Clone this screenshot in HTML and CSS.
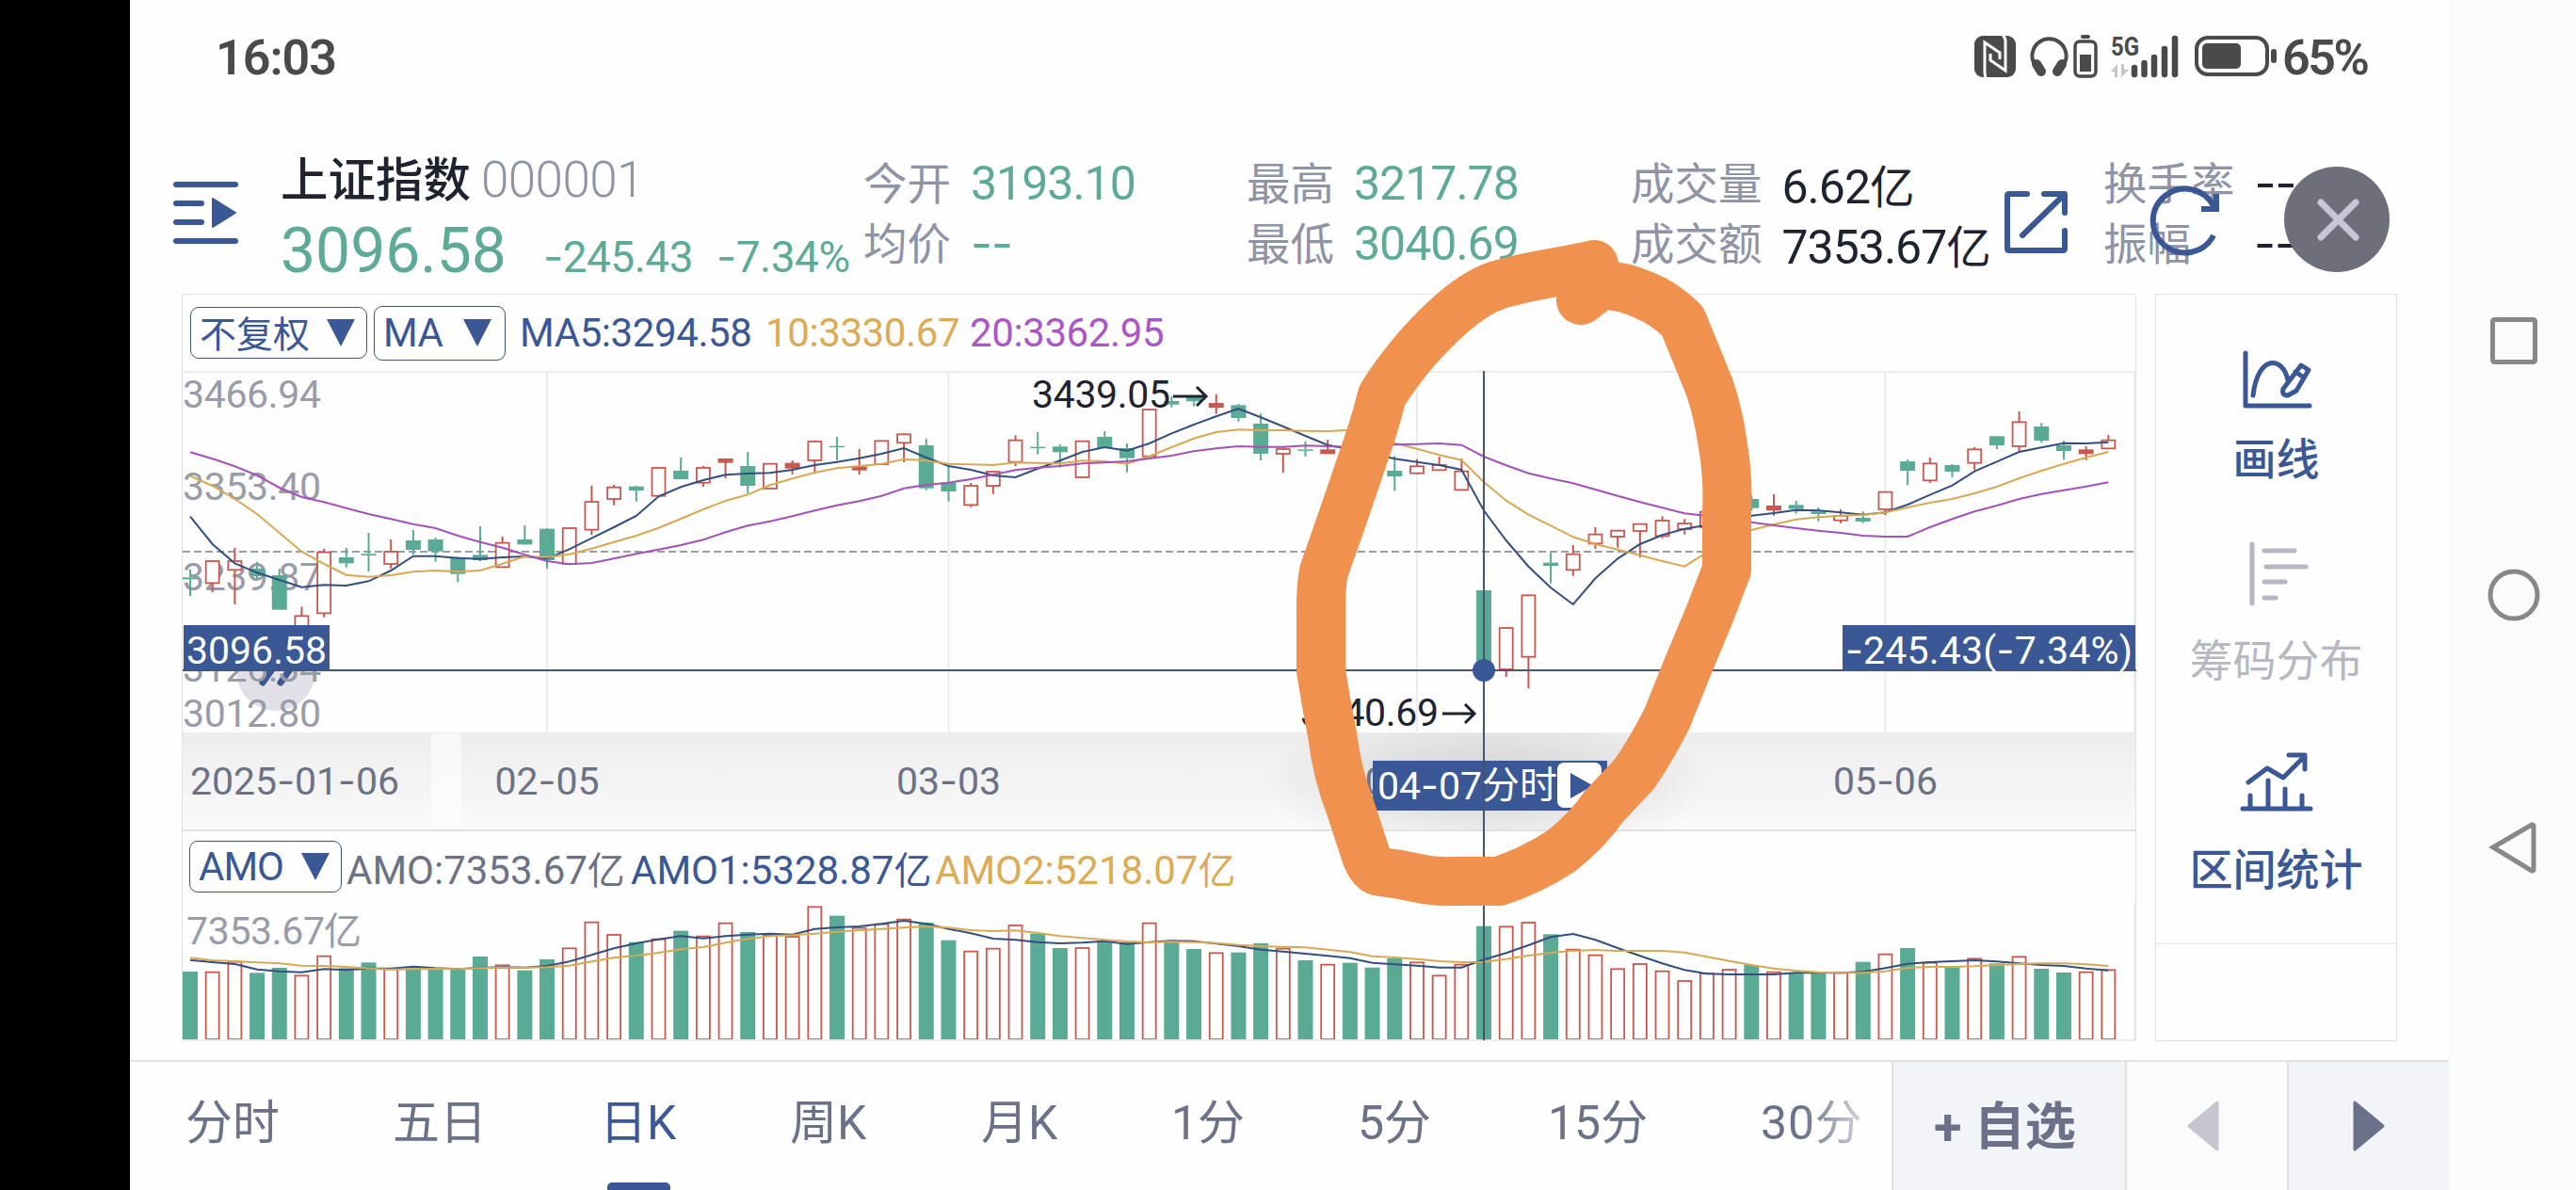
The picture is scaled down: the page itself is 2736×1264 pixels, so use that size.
FILE: index.html
```html
<!DOCTYPE html>
<html lang="zh-CN">
<head>
    <meta charset="UTF-8">
    <title>上证指数 000001</title>
    <link rel="stylesheet" href="styles.css">
</head>
<body>
    <div class="screen">
        <div class="cutout"></div>

        <div class="app">
            <div class="status">
                <span class="clock">16:03</span>
                <svg class="status-icons" width="324" height="50" viewBox="2096 35 324 50">
                    <rect x="2097" y="38" width="44" height="44" rx="9" fill="#4a4a4a"/>
                    <path d="M2109 83Q2108 80 2108 76V45L2124 56V63M2114 57V64L2130 75V44Q2130 40 2127 37" fill="none" stroke="#fff" stroke-width="3"/>
                    <path d="M2161 68Q2157 62 2159 55A18 18 0 0 1 2194 55Q2196 62 2192 68" fill="none" stroke="#4a4a4a" stroke-width="4"/>
                    <path d="M2163 68L2168 76M2190 68L2185 76" stroke="#4a4a4a" stroke-width="10" stroke-linecap="round"/>
                    <rect x="2210" y="37" width="10" height="4" rx="2" fill="#4a4a4a"/>
                    <rect x="2204" y="44" width="22" height="37" rx="5" fill="none" stroke="#4a4a4a" stroke-width="3.5"/>
                    <rect x="2209" y="58" width="12" height="18" fill="#4a4a4a"/>
                    <text x="2242" y="59" class="net" textLength="30" lengthAdjust="spacingAndGlyphs">5G</text>
                    <path d="M2242 76l7-8v14h-3v-6zM2261 74l-8 8V68h3v6z" fill="#c4c4c4"/>
                    <path d="M2267 72v7M2277.500 67v12M2288 61v18M2299 52v27M2310 41v38" stroke="#4a4a4a" stroke-width="6.500" stroke-linecap="round"/>
                    <rect x="2333" y="40" width="75" height="39" rx="12" fill="none" stroke="#4a4a4a" stroke-width="4"/>
                    <rect x="2339" y="46" width="41" height="27" rx="5" fill="#4a4a4a"/>
                    <rect x="2412" y="52" width="6" height="15" rx="3" fill="#4a4a4a"/>
                </svg>
                <span class="power">65%</span>
            </div>

            <div class="header">
                <svg class="menu-icon" width="72" height="70" viewBox="0 0 72 70">
                    <path d="M4 4H67M4 24H31M4 44H31M4 64H67" stroke="#3a5796" stroke-width="6" stroke-linecap="round"/>
                    <path d="M43 19V49L67 34Z" fill="#3a5796" stroke="#3a5796" stroke-width="2" stroke-linejoin="round"/>
                </svg>
                <div class="stock">
                    <div class="stock-name">上证指数<span class="code">000001</span></div>
                    <div class="stock-price">3096.58<span class="change"><i>-</i>245.43</span><span class="change pct"><i>-</i>7.34%</span></div>
                </div>
                <div class="quotes">
                    <div class="quote"><label>今开</label><b class="down">3193.10</b></div>
                    <div class="quote"><label>最高</label><b class="down">3217.78</b></div>
                    <div class="quote"><label>成交量</label><b>6.62<small>亿</small></b></div>
                    <div class="quote"><label>换手率</label><b><i>--</i></b></div>
                    <div class="quote"><label>均价</label><b class="down"><i>--</i></b></div>
                    <div class="quote"><label>最低</label><b class="down">3040.69</b></div>
                    <div class="quote"><label>成交额</label><b>7353.67<small>亿</small></b></div>
                    <div class="quote"><label class="wide">振幅</label><b><i>--</i></b></div>
                </div>
                <svg class="actions" width="420" height="124" viewBox="2124 170 420 124">
                    <path d="M2153 206H2134Q2132 206 2132 208V264Q2132 266 2134 266H2191Q2193 266 2193 264V245M2171 206H2193V226M2191 208L2148 250" fill="none" stroke="#3a5796" stroke-width="6" stroke-linecap="round" stroke-linejoin="round"/>
                    <path d="M2351 250A34 34 0 1 1 2351 219" fill="none" stroke="#3a5796" stroke-width="6"/>
                    <path d="M2354 206V222H2338" fill="none" stroke="#3a5796" stroke-width="6"/>
                    <circle cx="2482" cy="233" r="56" fill="#6f6e7b"/>
                    <path d="M2465 215L2502 252M2502 215L2465 252" stroke="#c5c7d5" stroke-width="7" stroke-linecap="round"/>
                </svg>
            </div>

            <div class="main">
                <div class="chart">
                    <div class="chart-bar">
                        <span class="select adjust"><em>不复权</em><svg width="30" height="29"><path d="M0 0H30L15 29Z"/></svg></span>
                        <span class="select ma">MA<svg width="30" height="29"><path d="M0 0H30L15 29Z"/></svg></span>
                        <span class="legend blue ma5">MA5:3294.58</span>
                        <span class="legend gold ma10">10:3330.67</span>
                        <span class="legend purple">20:3362.95</span>
                    </div>
                    <svg id="kline" width="2074" height="383"></svg>
                    <div class="axis"><svg id="dates" width="2074" height="102"></svg></div>
                    <div class="amo-bar">
                        <span class="select amo">AMO<svg width="30" height="29"><path d="M0 0H30L15 29Z"/></svg></span>
                        <span class="legend grey amo0">AMO:7353.67<small>亿</small></span>
                        <span class="legend blue amo1">AMO1:5328.87<small>亿</small></span>
                        <span class="legend gold amo2">AMO2:5218.07<small>亿</small></span>
                    </div>
                    <svg id="volume" width="2074" height="146"></svg>
                    <svg id="cursor" class="cursor" width="2075" height="794"></svg>
                </div>

                <div class="tools">
                    <div class="tool">
                        <svg width="80" height="66" viewBox="2379 370 80 66">
                            <path d="M2386 375V431H2454M2394 420C2399 376 2426 378 2431 404M2426 413L2445 388L2453 393L2440 415L2431 420Q2424 420 2426 413M2439 395L2448 401" fill="none" stroke="#3a5796" stroke-width="5" stroke-linecap="round" stroke-linejoin="round"/>
                        </svg>
                        <span>画线</span>
                    </div>
                    <div class="tool off">
                        <svg width="80" height="74" viewBox="2379 573 80 74">
                            <path d="M2393 578V641M2406 585H2438M2408 602H2450M2406 618H2428M2406 635H2418" fill="none" stroke="#b5b8c2" stroke-width="5" stroke-linecap="round"/>
                        </svg>
                        <span>筹码分布</span>
                    </div>
                    <div class="tool">
                        <svg width="84" height="68" viewBox="2376 797 84 68">
                            <path d="M2382 859H2454M2390 845V858M2409 829V858M2427 838V858M2445 845V858M2388 831L2408 816L2425 826L2447 804M2431 802H2448V817" fill="none" stroke="#3a5796" stroke-width="5" stroke-linecap="round" stroke-linejoin="round"/>
                        </svg>
                        <span>区间统计</span>
                    </div>
                </div>
            </div>

            <div class="tabs">
                <div class="periods">
                    <span>分时</span>
                    <span>五日</span>
                    <span class="active">日K</span>
                    <span>周K</span>
                    <span>月K</span>
                    <span>1分</span>
                    <span>5分</span>
                    <span>15分</span>
                    <span class="fade">30分</span>
                </div>
                <div class="add">+ 自选</div>
                <div class="step">
                    <svg width="36" height="56"><path d="M2 28L32 3V53Z" fill="#c5c6d0" stroke="#c5c6d0" stroke-width="3" stroke-linejoin="round"/></svg>
                </div>
                <div class="step next">
                    <svg width="36" height="56"><path d="M33 28L3 3V53Z" fill="#6b7189" stroke="#6b7189" stroke-width="3" stroke-linejoin="round"/></svg>
                </div>
            </div>

            <!-- hand-drawn marker -->
            <svg class="marker" width="500" height="730" viewBox="1370 240 500 730">
                <path d="M1693 281C1660 289 1620 293 1590 303S1530 342 1505 370Q1482 397 1468 420Q1463 440 1456 462L1426 550L1406 607Q1403 622 1403 645V712Q1409 750 1415 780Q1420 822 1434 857L1449 903Q1455 924 1466 926Q1485 928 1502 932Q1522 937 1544 936H1592Q1628 924 1658 904Q1686 882 1704 856L1736 822Q1754 796 1771 762L1791 712L1816 652L1834 605V545Q1836 505 1829 467Q1825 440 1816 412L1787 341Q1768 322 1745 313Q1715 300 1697 305L1679 319"/>
            </svg>
        </div>

        <div class="navbar">
            <svg width="60" height="60"><rect x="8.500" y="7.500" width="45" height="45" rx="2"/></svg>
            <svg width="60" height="60"><circle cx="31" cy="30" r="25"/></svg>
            <svg width="60" height="60"><path d="M9 28L50 4Q52 4 52 6V51Q52 53 50 53Z"/></svg>
        </div>
    </div>
    <script src="chart.js"></script>
</body>
</html>
```
FILE: styles.css
```css
* {
    box-sizing: border-box;
}
body {
    margin: 0;
    font-family: Roboto, "Noto Sans CJK SC", sans-serif;
    background: #fff;
    overflow: hidden;
}
i {
    font-family: Inter, sans-serif;
    font-style: normal;
}
em {
    font-style: normal;
}
small {
    font-size: 0.95em;
}
svg {
    display: block;
    flex: none;
}
.screen {
    display: flex;
    width: 2736px;
    height: 1264px;
}
.cutout {
    width: 138px;
    background: #000;
}
.app {
    position: relative;
    display: flex;
    flex-direction: column;
    width: 2463px;
    background: #fefefe;
    white-space: nowrap;
}
.navbar {
    width: 135px;
    padding: 332px 0 0 38px;
    display: flex;
    flex-direction: column;
    gap: 210px;
    background: #fbfbfb;
}
.navbar svg {
    fill: none;
    stroke: #888;
    stroke-width: 5;
}

/* status bar */
.status {
    display: flex;
    align-items: center;
    height: 120px;
    padding: 0 83px 0 91px;
    font-size: 52px;
    font-weight: 600;
    color: #4a4a4a;
}
.clock {
    margin-right: auto;
    padding-top: 2px;
    letter-spacing: -1px;
}
.power {
    width: 94px;
    margin-left: 6px;
    padding-top: 2px;
    font-size: 52px;
    letter-spacing: -2.5px;
}
.status-icons {
    position: relative;
    left: 2px;
}
.net {
    font-size: 28px;
    font-weight: 700;
    fill: #4a4a4a;
}

/* header */
.header {
    position: relative;
    display: flex;
    height: 192px;
    padding-left: 45px;
}
.menu-icon {
    margin-top: 72px;
}
.stock {
    width: 619px;
    margin-left: 43px;
    padding-top: 36px;
}
.stock-name {
    height: 70px;
    line-height: 70px;
    font-size: 50.5px;
    font-weight: 500;
    color: #1f2330;
}
.code {
    margin-left: 11px;
    font-size: 53px;
    font-weight: 350;
    letter-spacing: -0.6px;
    color: #8f93a6;
}
.stock-price {
    height: 80px;
    line-height: 82px;
    font-size: 66px;
    color: #5dab96;
}
.change {
    margin-left: 39px;
    font-size: 46px;
    letter-spacing: -0.5px;
}
.change.pct {
    margin-left: 25px;
}
.quotes {
    display: grid;
    grid-template-columns: 407px 408px 502px 350px;
    grid-template-rows: 64px 64px;
    height: 128px;
    margin-top: 43px;
}
.quote {
    display: flex;
    align-items: center;
    font-size: 50px;
}
.quote label {
    margin-right: 21px;
    padding-bottom: 8px;
    font-size: 46.5px;
    color: #8f93a6;
}
.quote label.wide {
    margin-right: 67px;
}
.quote b {
    font-weight: 400;
    letter-spacing: -1px;
    color: #1f2330;
}
.quote b.down {
    color: #5dab96;
}
.actions {
    position: absolute;
    left: 1986px;
    top: 50px;
}

/* chart */
.main {
    display: flex;
    height: 814px;
    padding-left: 55px;
}
.chart {
    position: relative;
    width: 2076px;
    height: 794px;
    border: 1px solid #dfe1e3;
    border-width: 1px 1px 0;
}
.chart-bar,
.amo-bar {
    display: flex;
    align-items: center;
    font-size: 42px;
}
.chart-bar {
    height: 83px;
    padding-left: 8px;
    border-bottom: 2px solid #ececec;
}
.amo-bar {
    height: 79px;
    padding-left: 7px;
    border-top: 2px solid #dfe1e3;
}
.select {
    display: flex;
    align-items: center;
    justify-content: space-between;
    height: 55px;
    padding: 0 12px 0 9px;
    border: 1.5px solid #3d5675;
    border-radius: 9px;
    color: #3a5796;
}
.select em {
    padding-bottom: 4px;
}
.select svg {
    fill: #3a5796;
}
.select.adjust {
    width: 188px;
    font-size: 39px;
}
.select.ma {
    width: 140px;
    height: 58px;
    margin-left: 7px;
    padding-right: 14px;
    letter-spacing: -0.5px;
}
.select.amo {
    width: 162px;
    margin-bottom: 2px;
    letter-spacing: -1px;
}
.legend {
    letter-spacing: -0.4px;
}
.ma5 {
    width: 261px;
    margin-left: 15px;
}
.ma10 {
    width: 217px;
}
.amo-bar .legend {
    letter-spacing: 0;
}
.amo0 {
    width: 302px;
    margin-left: 5px;
}
.amo1 {
    width: 323px;
}
.blue {
    color: #3a5796;
}
.gold {
    color: #dcab55;
}
.purple {
    color: #ab56c6;
}
.grey {
    color: #6c7285;
}
.axis {
    height: 102px;
    background: linear-gradient(90deg, transparent 264px, rgba(252, 252, 252, 0.75) 264px, rgba(252, 252, 252, 0.75) 296px, transparent 296px), linear-gradient(#ededed, #fafafa);
}
.cursor {
    position: absolute;
    left: 0;
    top: -1px;
}
#kline {
    border-bottom: 1px solid #ececec;
}
#kline,
#volume {
    border-right: 2px solid #ececec;
}
#volume {
    border-bottom: 2px solid #ececec;
}
.tick {
    font-size: 41px;
    fill: #989ca8;
}
.date {
    font-size: 41px;
    fill: #6c7285;
}
.mark {
    font-size: 41px;
    fill: #1f2330;
}
.flag {
    font-size: 41px;
    fill: #fff;
}
.dash {
    font-family: Inter, sans-serif;
}

/* right tool panel */
.tools {
    display: flex;
    flex-direction: column;
    width: 257px;
    height: 794px;
    margin-left: 20px;
    padding-top: 57px;
    border: 1px solid #dfe1e3;
    background: linear-gradient(#dfe1e3, #dfe1e3) 0 689px / 100% 1px no-repeat;
}
.tool {
    display: flex;
    flex-direction: column;
    align-items: center;
    justify-content: space-between;
    height: 149px;
    margin-bottom: 54px;
    font-size: 46px;
    line-height: 62px;
    font-weight: 450;
    color: #3a5796;
}
.tool.off {
    height: 160px;
    color: #b5b8c2;
    font-weight: 400;
}
.tool:last-child {
    margin-top: 10px;
    height: 158px;
}

/* bottom tabs */
.tabs {
    display: flex;
    height: 138px;
    border-top: 2px solid #dfe1e3;
    font-size: 50px;
    color: #6b7189;
}
.periods {
    display: grid;
    grid-template-columns: 220px 220px 202px 203px 202px 198px 202px 226px auto;
    width: 1871px;
    padding-left: 59px;
    line-height: 130px;
}
.active {
    position: relative;
    color: #3a5796;
}
.active::after {
    content: "";
    position: absolute;
    left: 8px;
    top: 128px;
    width: 67px;
    height: 14px;
    border-radius: 5px;
    background: #3a5796;
}
.fade {
    justify-self: start;
    letter-spacing: 0.8px;
    color: transparent;
    background: linear-gradient(90deg, #6b7189 40%, #d3d5dc);
    background-clip: text;
    -webkit-background-clip: text;
}
.add {
    width: 248px;
    padding-left: 43px;
    line-height: 140px;
    font-size: 54px;
    font-weight: 700;
    border-left: 2px solid #dfe1e3;
    background: #f3f4f7;
}
.step {
    display: flex;
    align-items: center;
    justify-content: center;
    width: 172px;
    padding-right: 6px;
    border-left: 2px solid #dfe1e3;
    background: #fbfbfc;
}
.step.next {
    padding: 0;
    background: #f3f4f7;
}

.marker {
    position: absolute;
    left: 1232px;
    top: 240px;
    fill: none;
    stroke: #f0914e;
    stroke-width: 52;
    stroke-linecap: round;
    stroke-linejoin: round;
}
```
FILE: chart.js
```js
// first candle centre and step between candles
const X0 = 8;
const STEP = 23.69;
const RED = '#c9584f';
const GREEN = '#5aab95';
const BLUE = '#334f80';
const GOLD = '#d8a953';
const PURPLE = '#a452b8';

// direction, high, body top, body bottom, low
const candles = `g675,700,706,760 r645,648,718,748 r606,648,676,786 g650,672,696,704 g672,693,803,803
r793,823,870,870 r609,620,814,827 g606,636,655,668 g558,625,630,681 r579,618,657,672
g549,582,612,627 g573,579,617,650 g634,636,689,715 g537,628,645,648 r570,590,667,667
g534,579,595,597 g543,545,645,671 r541,543,657,657 r407,459,548,565 r405,413,450,470
g407,410,423,458 r349,351,440,440 g318,360,387,387 r345,351,398,411 r323,324,332,384
g300,345,408,432 r338,338,417,417 r327,338,350,372 r263,267,327,370 g252,281,284,327
r291,349,356,373 r264,265,339,341 r241,244,271,333 g258,279,416,422 g345,398,426,458
r399,408,469,476 r360,363,408,434 r247,263,332,345 g237,284,287,308 g276,283,301,350
r264,266,381,381 g234,252,288,288 g273,288,320,365 r162,165,314,314 g123,138,149,158
g125,125,139,155 r116,147,156,179 g147,151,192,203 g178,210,306,327 r285,291,306,367
g266,292,295,315 r261,295,304,305 g290,300,330,345 g300,310,350,360 g313,360,378,424
r323,346,368,371 r315,342,358,359 r321,362,421,422 g678,741,980,1128 r858,861,993,1017
r755,757,953,1054 g622,653,663,719 r597,626,676,695 r540,563,592,609 r549,551,570,605
r529,530,552,637 r505,519,568,575 r514,528,546,563 r489,491,540,540 r470,480,500,520
g438,450,479,487 r435,474,484,503 g456,469,482,497 g477,490,498,521 r483,504,518,527
g490,510,522,527 r426,428,483,502 g324,330,360,406 r318,337,391,399 g339,342,363,380
r285,292,335,357 g249,250,279,291 r171,205,282,297 g208,219,264,271 g265,279,297,325
r282,295,304,326 r246,263,289,291`.split(/\s+/).map(s => [s[0], ...s.slice(1).split(',').map(Number)]);

const ma5 = [506,594,655,685,708,731,724,726,712,678,632,632,638,641,636,633,640,610,575,540,504,442,412,390,373,369,367,357,342,332,320,306,288,318,345,357,375,381,353,328,300,285,296,273,241,213,187,162,190,219,249,278,292,306,322,332,342,357,487,582,665,733,786,703,640,594,565,545,533,515,503,495,485,487,493,500,493,468,437,407,362,331,300,286,272,273,269];
const ma10 = [377,408,450,498,558,618,657,692,698,693,682,678,682,678,656,633,635,626,608,587,567,542,513,483,456,436,406,385,366,352,345,338,323,328,338,340,342,334,335,337,328,330,338,314,285,257,237,229,231,231,233,234,230,248,272,290,310,326,396,455,500,535,571,594,611,629,648,665,620,580,549,531,515,508,503,501,493,477,462,450,432,411,384,360,338,318,300];
const ma20 = [301,322,346,375,414,444,460,479,498,514,530,543,567,587,605,628,648,658,654,640,625,611,597,580,556,535,521,505,487,470,457,440,416,405,398,387,373,358,350,345,337,334,330,321,312,298,289,282,284,284,280,282,284,280,277,275,273,278,315,343,368,385,400,420,440,460,478,496,504,513,524,534,543,551,558,567,570,570,540,514,490,471,450,434,422,410,397];

const amo = [816,818,785,820,804,829,767,805,787,808,805,806,808,768,796,812,777,742,659,699,722,713,686,704,662,690,700,705,610,638,677,665,650,660,716,752,743,669,695,741,741,718,723,662,722,744,757,755,726,743,780,794,788,803,774,787,829,794,671,673,660,697,746,764,808,792,815,846,822,810,795,818,820,822,820,785,761,741,788,803,775,790,769,807,819,818,811];
const amo1 = [779,786,792,809,815,818,808,811,806,806,800,805,808,804,802,803,798,784,763,742,726,713,703,710,703,698,695,698,680,675,672,664,654,664,680,694,711,715,722,726,724,719,728,722,718,719,727,735,746,752,759,766,773,788,793,797,803,803,778,757,732,706,696,715,741,766,790,811,823,825,825,825,820,820,820,817,805,791,786,783,780,784,790,795,798,806,812];
const amo2 = [772,780,783,787,790,797,798,801,806,809,808,807,808,805,803,803,802,797,784,772,765,756,745,738,724,712,703,700,695,689,684,680,676,672,676,684,687,685,693,703,709,715,720,723,721,722,725,731,735,737,739,746,754,767,771,776,783,786,785,776,765,756,750,747,750,750,750,755,769,782,795,806,813,818,820,820,815,804,801,801,799,795,792,790,790,793,798];

const px = i => X0 + STEP * i;
const ky = v => (v - 48) / 3;
const vy = v => (v - 600) / 3;

function line(values, y, color) {
    const points = values.map((v, i) => px(i).toFixed(1) + ',' + y(v).toFixed(1)).join(' ');
    return `<polyline points="${points}" fill="none" stroke="${color}" stroke-width="2"/>`;
}

function bar(dir, x, top, bottom) {
    const h = bottom - top;
    if (dir === 'g') {
        return `<rect x="${x - 8}" y="${top}" width="16" height="${Math.max(h, 1.5)}" fill="${GREEN}"/>`;
    }
    if (h < 4.5) {
        return `<rect x="${x - 8}" y="${top - 1}" width="16" height="${h + 2}" fill="${RED}"/>`;
    }
    return `<rect x="${x - 7}" y="${top}" width="14" height="${h}" fill="#fff" stroke="${RED}" stroke-width="1.800"/>`;
}

// the minus sign uses a wider glyph than the digits
function label(cls, x, y, text, width, anchor) {
    const html = text.replace(/-/g, '<tspan class="dash">-</tspan>');
    return `<text class="${cls}" x="${x}" y="${y}" text-anchor="${anchor || 'start'}" textLength="${width}">${html}</text>`;
}

function arrow(x1, x2, y) {
    return `<path d="M${x1} ${y}H${x2}M${x2 - 10} ${y - 10}L${x2} ${y}L${x2 - 10} ${y + 10}" fill="none" stroke="#1f2330" stroke-width="3"/>`;
}

function drawKline() {
    let out = '';
    [16, 34, 55, 76].forEach(i => {
        out += `<path d="M${px(i)} 0V382" stroke="#ebecee" stroke-width="2"/>`;
    });
    out += '<circle cx="99" cy="317" r="42" fill="#e0e0e6"/>';
    out += '<path d="M85 329l10 -14M104 329l10 -14" stroke="#3a5796" stroke-width="7" stroke-linecap="round"/>';
    [['3466.94', 37], ['3353.40', 135], ['3239.87', 231], ['3126.34', 328], ['3012.80', 376]].forEach(t => {
        out += label('tick', 0, t[1], t[0], 147);
    });
    out += '<path d="M0 190H2072" stroke="#9a9ea8" stroke-width="2" stroke-dasharray="8 4"/>';
    candles.forEach((c, i) => {
        const x = px(i);
        out += `<path d="M${x} ${ky(c[1])}V${ky(c[2])}M${x} ${ky(c[3])}V${ky(c[4])}" stroke="${c[0] === 'g' ? GREEN : RED}" stroke-width="2"/>`;
        out += bar(c[0], x, ky(c[2]), ky(c[3]));
    });
    out += line(ma5, ky, BLUE) + line(ma10, ky, GOLD) + line(ma20, ky, PURPLE);
    out += label('mark', 902, 37, '3439.05', 147) + arrow(1052, 1087, 25);
    out += label('mark', 1187, 375, '3040.69', 147) + arrow(1338, 1372, 362);
    document.getElementById('kline').innerHTML = out;
}

function drawDates() {
    let out = '<defs><radialGradient id="shade"><stop offset="0.4" stop-color="#888" stop-opacity="0.2"/><stop offset="1" stop-color="#888" stop-opacity="0"/></radialGradient></defs>';
    out += '<ellipse cx="1385" cy="55" rx="240" ry="75" fill="url(#shade)"/>';
    out += label('date', 8, 65, '2025-01-06', 222);
    [['02-05', 16], ['03-03', 34], ['04-01', 55], ['05-06', 76]].forEach(d => {
        out += label('date', px(d[1]), 65, d[0], 111, 'middle');
    });
    document.getElementById('dates').innerHTML = out;
}

function drawVolume() {
    let out = '';
    amo.forEach((v, i) => {
        out += bar(candles[i][0], px(i), vy(v), 144);
    });
    out += line(amo1, vy, BLUE) + line(amo2, vy, GOLD);
    out += label('tick', 4, 43, '7353.67', 147);
    out += '<text class="tick" x="150" y="43" style="font-size:40px">亿</text>';
    document.getElementById('volume').innerHTML = out;
}

function drawCursor() {
    const x = px(58);
    let out = `<rect x="1264" y="496" width="249" height="53" fill="#3a5796"/>`;
    out += `<path d="M0 400H2075M${x} 82V793" stroke="#435570" stroke-width="2"/>`;
    out += `<circle cx="${x}" cy="400" r="12" fill="#3a5796"/>`;
    out += '<rect x="1" y="352" width="155" height="48" fill="#3a5796"/>';
    out += label('flag', 4, 393, '3096.58', 149);
    out += '<rect x="1763" y="352" width="311" height="48" fill="#3a5796"/>';
    out += label('flag', 1766, 393, '-245.43(-7.34%)', 305);
    out += label('flag', 1269, 537, '04-07', 111);
    out += '<text class="flag" x="1380" y="536" style="font-size:40px">分时</text>';
    out += '<rect x="1460" y="498" width="47" height="48" rx="7" fill="#fff"/>';
    out += '<path d="M1474 509V536L1498 522.500Z" fill="#3a5796"/>';
    document.getElementById('cursor').innerHTML = out;
}

drawKline();
drawDates();
drawVolume();
drawCursor();
```
